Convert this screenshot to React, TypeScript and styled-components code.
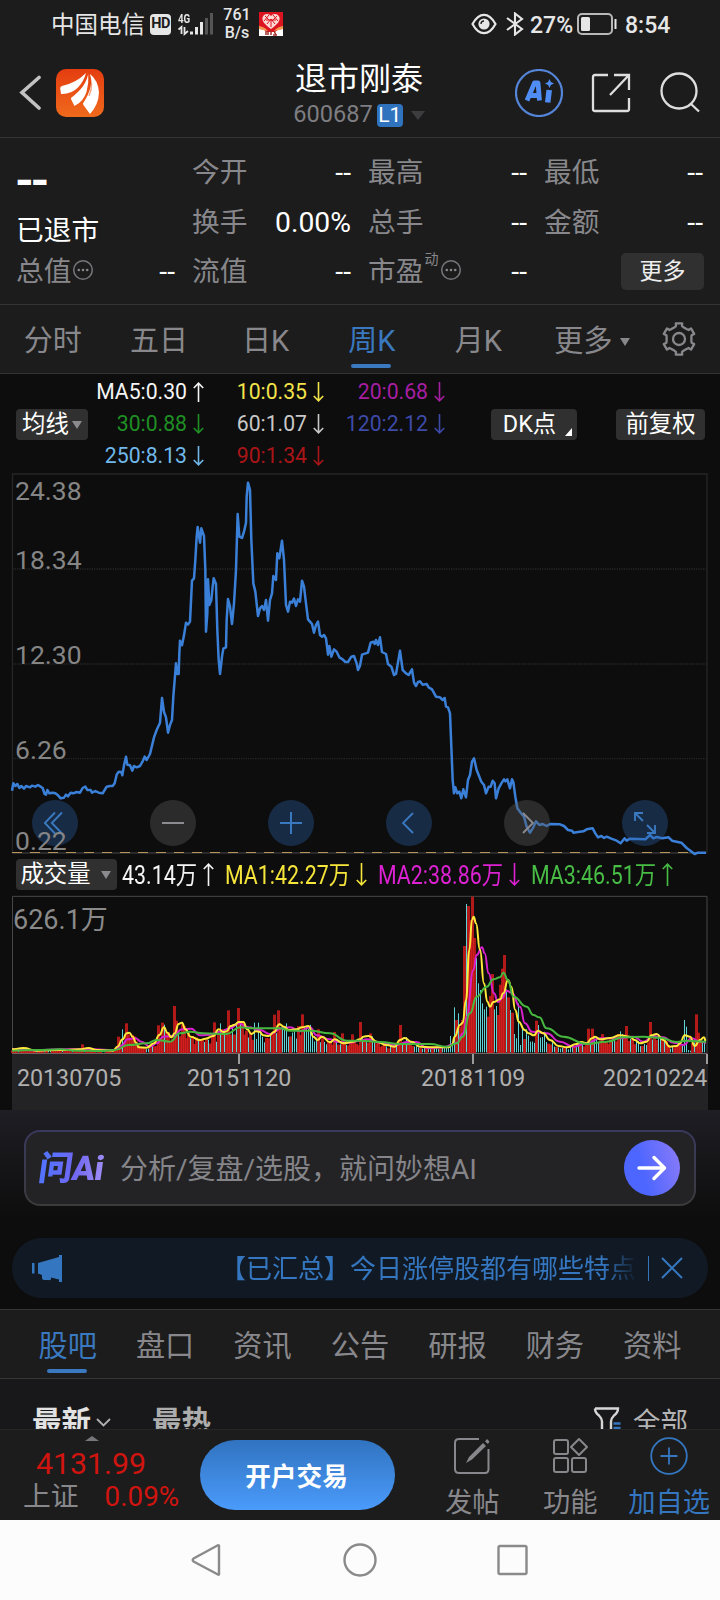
import React from "react";
import styled, { createGlobalStyle } from "styled-components";

const Global = createGlobalStyle`
  * { box-sizing: border-box; }
  body { margin: 0; background: #0d0d0d; font-family: Roboto, "Noto Sans CJK SC", sans-serif; }
  svg { display: block; flex: none; }
`;

const Screen = styled.div`
  width: 720px;
  height: 1600px;
  overflow: hidden;
  display: flex;
  flex-direction: column;
  background: #0d0d0d;
  color: #fff;
  line-height: 1;
  white-space: nowrap;
`;

/* ---------- status bar ---------- */
const StatusBar = styled.div`
  height: 48px;
  padding: 0 50px 0 51px;
  display: flex;
  align-items: center;
  background: #1c1c1c;
  color: #e6e6e6;
`;
const Carrier = styled.span`font-size: 23.5px; font-weight: 400; width: 99px; padding-top: 3px;`;
const HdBadge = styled.span`
  width: 21px; height: 21px; border-radius: 4px; background: #e6e6e6; color: #1c1c1c;
  font-size: 14.5px; font-weight: 700; display: flex; align-items: center; justify-content: center;
  letter-spacing: -0.5px;
`;
const Signal = styled.div`width: 36px; height: 24px; margin-left: 7px; position: relative;`;
const SignalLabel = styled.span`
  position: absolute; left: 0; top: 0; font-size: 13px; font-weight: 700; transform: scaleX(0.75); transform-origin: left;
`;
const Speed = styled.div`
  width: 30px; margin-left: 8px; font-size: 16px; font-weight: 500; line-height: 18px; text-align: center; padding-bottom: 1px;
`;
const StatusRight = styled.div`margin-left: auto; display: flex; align-items: center;`;
const StatusNumber = styled.span<{ $w: number }>`
  font-size: 23px; font-weight: 500; width: ${(p) => p.$w}px; padding-top: 2px;
`;

/* ---------- header ---------- */
const Header = styled.header`
  height: 90px; padding: 0 19px; display: flex; align-items: center; justify-content: space-between;
  background: #1c1c1c; border-bottom: 1px solid #333;
`;
const HeaderSide = styled.div<{ $gap: number }>`display: flex; align-items: center; width: 186px; gap: ${(p) => p.$gap}px;`;
const TitleBlock = styled.div`display: flex; flex-direction: column; align-items: center; padding: 5px 2px 0 0;`;
const Title = styled.h1`margin: 0; font-size: 32px; font-weight: 400; line-height: 40px;`;
const CodeRow = styled.div`display: flex; align-items: center; height: 32px; color: #7e7e82; font-size: 23.6px;`;
const LevelBadge = styled.span`
  margin: 0 8px 0 4px; width: 26px; height: 23px; border-radius: 4px; background: #2f73bf; color: #fff;
  font-size: 21px; display: flex; align-items: center; justify-content: center;
`;
const Caret = styled.i<{ $w: number; $h: number; $c: string }>`
  border-left: ${(p) => p.$w / 2}px solid transparent;
  border-right: ${(p) => p.$w / 2}px solid transparent;
  border-top: ${(p) => p.$h}px solid ${(p) => p.$c};
`;

/* ---------- quote ---------- */
const Quote = styled.section`
  height: 167px; padding: 10px 16px 7px 16px; background: #1c1c1c; border-bottom: 1px solid #333;
  display: grid; grid-template-columns: 160px repeat(3, 160px); column-gap: 16px; grid-template-rows: repeat(3, 49.5px);
`;
const PriceCell = styled.div`grid-row: 1 / span 2; display: flex; flex-direction: column; padding-top: 9px;`;
const PriceDash = styled.span`font-size: 48px; font-weight: 700; line-height: 48px; letter-spacing: -3.5px; margin-left: -1px;`;
const StatusText = styled.span`font-size: 27.7px; font-weight: 400; line-height: 34px; margin-top: 9px;`;
const QuoteCell = styled.div`display: flex; align-items: center; color: #88888c; font-size: 27.7px; padding-top: 1px;`;
const QuoteValue = styled.span`margin-left: auto; margin-right: 1px; color: #fff; font-size: 28.3px;`;
const Sup = styled.sup`font-size: 14px; align-self: flex-start; margin-top: 4px; line-height: 14px; width: 16px; padding-left: 1px;`;
const MoreButton = styled.button`
  margin: -1px 0 0 auto; width: 83px; height: 37px; border: 0; border-radius: 5px; background: #303030; color: #eee;
  font: 400 23px/1 Roboto, "Noto Sans CJK SC", sans-serif; padding: 0;
`;

/* ---------- period tabs ---------- */
const PeriodTabs = styled.nav`
  height: 69px; display: flex; background: #1c1c1c; border-bottom: 1px solid #333;
`;
const PeriodTab = styled.div<{ $active?: boolean }>`
  width: 106.4px; display: flex; justify-content: center; align-items: center; position: relative; padding: 5px 1px 0 0;
  font-size: 29px; color: ${(p) => (p.$active ? "#3a78bf" : "#88888c")};
  &::after {
    content: ""; position: absolute; left: 50%; margin-left: -21px; bottom: 5px; width: 40px; height: 4px; border-radius: 2px;
    background: ${(p) => (p.$active ? "#3a78bf" : "transparent")};
  }
`;
const PeriodMore = styled.div`
  width: 130px; padding: 5px 0 0 22px; display: flex; align-items: center; gap: 7px; font-size: 29.3px; color: #88888c;
`;
const GearSlot = styled.div`flex: 1; display: flex; align-items: center; padding-bottom: 1px; margin-left: -1px;`;

/* ---------- chart ---------- */
const Legend = styled.div`height: 96px; display: flex; align-items: center; padding: 4px 15px 0 16px;`;
const Chip = styled.span<{ $w: number }>`
  width: ${(p) => p.$w}px; height: 31px; border-radius: 4px; background: #303030; color: #fff; font-size: 23.4px;
  display: flex; align-items: center; justify-content: center; gap: 3px; position: relative; padding-top: 1px;
`;
const LegendGrid = styled.div`
  display: grid; grid-template-columns: 117px 120px 121px; grid-template-rows: repeat(3, 32px); width: 358px; margin: 0 46px 0 -1px;
`;
const LegendItem = styled.span<{ $c: string }>`
  color: ${(p) => p.$c}; font-size: 21.2px; display: flex; align-items: center; justify-content: flex-end; gap: 6px;
`;
const Corner = styled.i`
  position: absolute; right: 5px; bottom: 4px; border-left: 7px solid transparent; border-bottom: 8px solid #fff;
`;
const ChartBox = styled.div<{ $h: number }>`position: relative; height: ${(p) => p.$h}px;`;
const AxisLabel = styled.span<{ $y: number }>`
  position: absolute; left: 15px; top: ${(p) => p.$y}px; font-size: 26.5px; color: #858585;
`;
const Controls = styled.div`position: absolute; left: 32px; top: 330px; display: flex; gap: 72px;`;
const Control = styled.div<{ $muted?: boolean }>`
  width: 46px; height: 46px; border-radius: 50%; display: flex; align-items: center; justify-content: center;
  color: ${(p) => (p.$muted ? "#8b8b90" : "#3a78bf")};
  background: ${(p) => (p.$muted ? "rgba(90,90,90,.4)" : "rgba(40,95,165,.37)")};
`;
const VolumeLegend = styled.div`height: 36px; display: flex; align-items: center; padding-left: 16px; margin-top: -4px;`;
const Condensed = styled.span<{ $c: string; $w: number; $m: number }>`
  color: ${(p) => p.$c}; width: ${(p) => p.$w}px; margin-left: ${(p) => p.$m}px; display: flex; justify-content: space-between; align-items: center;
`;
const Squeezed = styled.span`font-size: 25px; transform: scaleX(0.855); transform-origin: left; width: 0; padding-top: 3px;`;
const VolumeLabel = styled.span`position: absolute; left: 13px; top: 15px; font-size: 27px; color: #8a8a8a;`;
const Dates = styled.div`
  height: 56px; margin: 0 12px; padding: 13px 0 0 5px; background: #232325; color: #b0b0b0; font-size: 23.2px;
  display: grid; grid-template-columns: 170px 234px 182px 1fr;
`;

/* ---------- ask box ---------- */
const AskArea = styled.section`height: 128px; padding: 20px 24px 0; background: linear-gradient(#1e1e24, #0d0d0d 85%);`;
const AskFrame = styled.div`height: 76px; padding: 2px; border-radius: 16px; background: linear-gradient(#3a3960, #3b3a3c);`;
const AskBox = styled.div`
  height: 100%; border-radius: 14px; background: #232325; display: flex; align-items: center; padding: 0 14px 0 13px;
`;
const AskLogo = styled.span`
  font-size: 34px; font-weight: 900; width: 81px; letter-spacing: -0.7px;
  background: linear-gradient(90deg, #5572ff 10%, #7067f0 45%, #a08ff5 82%); -webkit-background-clip: text; color: transparent;
  transform: skewX(-8deg); line-height: 40px;
`;
const AskHint = styled.span`flex: 1; font-size: 28px; color: #85858a; padding-top: 4px;`;
const SendButton = styled.span`
  width: 56px; height: 56px; border-radius: 50%; background: linear-gradient(75deg, #4d66ff 35%, #8d7cf8);
  display: flex; align-items: center; justify-content: center;
`;
const Notice = styled.section`
  height: 60px; margin: 0 12px; padding: 0 25px 0 20px; border-radius: 30px; background: #111a24; color: #3476bf;
  display: flex; align-items: center;
`;
const NoticeText = styled.span`
  margin-left: 158px; width: 418px; font-size: 26px; overflow: hidden; line-height: 36px; padding-top: 1px;
  mask-image: linear-gradient(90deg, #000 92%, transparent 100%);
`;
const NoticeRule = styled.i`width: 1px; height: 25px; background: #3476bf; margin: 0 12px 0 11px;`;

/* ---------- feed ---------- */
const FeedTabs = styled.nav`
  height: 70px; margin-top: 11px; padding: 0 19px; display: flex; background: #1c1c1c;
  border-top: 1px solid #363636; border-bottom: 1px solid #363636;
`;
const FeedTab = styled(PeriodTab)`
  width: auto; flex: 1; font-size: 29.2px; padding: 5px 0 0;
  &::after { bottom: 5px; }
`;
const Feed = styled.div`
  height: 50px; overflow: hidden; background: #18181a; display: flex; align-items: flex-start; padding: 28px 32px 0 32px;
`;
const FeedSort = styled.span<{ $c: string; $w: number }>`
  width: ${(p) => p.$w}px; color: ${(p) => p.$c}; font-weight: 700; font-size: 29.5px; display: flex; align-items: center; gap: 5px; line-height: 30px;
`;
const FeedFilter = styled.span`margin-left: auto; display: flex; gap: 12px; color: #b4b4b4; font-size: 27.5px; line-height: 32px;`;

/* ---------- bottom ---------- */
const BottomBar = styled.footer`
  height: 91px; background: #1c1c1c; border-top: 1px solid #262626; display: flex; padding-right: 6px;
`;
const IndexBox = styled.div`width: 200px; position: relative; padding: 17px 0 0 23px; color: #d0140f;`;
const IndexCaret = styled.i`
  position: absolute; left: 85px; top: 6px; border-left: 7px solid transparent; border-right: 7px solid transparent; border-bottom: 5px solid #77777b;
`;
const IndexValue = styled.div`font-size: 30.3px; line-height: 34px; padding-left: 13px;`;
const IndexRow = styled.div`display: flex; align-items: center; font-size: 27.8px; line-height: 32px; gap: 26px;`;
const IndexName = styled.span`color: #88888c;`;
const TradeButton = styled.div`
  width: 196px; height: 70px; margin-top: 10px; border-radius: 35px; background: linear-gradient(#3173c0, #4a9bfb);
  display: flex; align-items: center; justify-content: center; font-weight: 700; font-size: 25.7px; padding: 5px 2px 0 0;
`;
const Action = styled.div<{ $w: number; $m: number; $c?: string }>`
  width: ${(p) => p.$w}px; margin-left: ${(p) => p.$m}px; color: ${(p) => p.$c || "#88888c"}; padding-top: 7px;
  display: flex; flex-direction: column; align-items: center; gap: 12px; font-size: 27.3px; line-height: 32px;
`;
const SystemNav = styled.div`
  height: 80px; background: #fcfcfc; display: flex; justify-content: center; align-items: center; gap: 120px; padding-right: 0;
`;

/* ---------- chart data, in thirds of a pixel ---------- */
const PRICE =
  "36,512 40,490 46,498 52,492 58,504 64,498 72,506 78,498 90,502 96,497 106,500 114,495 122,500 128,504 134,522 138,524 142,510 148,520 158,518 166,520 174,526 182,535 192,533 198,524 204,529 212,518 220,520 230,516 240,518 248,504 256,500 262,510 272,510 276,518 286,513 296,518 308,520 314,510 320,500 330,498 338,498 344,490 350,464 356,455 364,456 367,466 372,436 378,410 382,434 390,436 397,452 402,438 410,442 420,438 428,424 434,410 440,420 450,402 462,352 470,330 480,308 486,234 492,276 498,292 504,338 510,315 516,300 520,230 524,180 528,130 532,162 536,162 538,100 540,62 546,76 552,46 558,8 564,14 570,5 576,-118 582,-125 586,-180 590,-250 593,-279 600,-232 604,-275 612,-252 616,-150 618,35 622,-20 624,-122 628,-45 634,-60 638,-100 641,-125 648,-108 652,30 656,120 660,162 666,110 670,86 678,82 680,0 684,-63 690,-40 696,12 702,-50 708,-150 713,-318 718,-250 726,-246 732,-265 738,-292 740,-370 744,-412 750,-390 754,-240 760,-110 766,-85 774,-12 780,-35 786,-42 792,-30 798,-60 804,2 810,-60 816,-80 820,-132 828,-120 832,-200 838,-185 846,-238 852,-180 858,-45 864,-25 870,-55 876,-52 882,-64 888,-42 894,-62 900,-55 906,-118 912,-100 918,-50 924,-2 930,5 936,12 942,38 948,15 954,5 960,45 966,50 972,45 978,55 984,104 988,78 994,110 1002,88 1010,95 1018,112 1028,118 1036,126 1044,126 1054,110 1062,108 1070,130 1074,150 1080,137 1086,104 1104,98 1112,68 1120,65 1124,72 1128,60 1134,75 1140,52 1146,96 1158,102 1164,132 1174,140 1182,165 1188,162 1200,92 1208,150 1218,160 1226,165 1236,148 1242,188 1248,198 1254,186 1260,184 1268,194 1280,192 1286,202 1296,208 1308,230 1320,232 1328,240 1334,234 1338,260 1344,262 1350,280 1354,380 1358,480 1362,520 1366,502 1372,520 1378,515 1384,535 1390,508 1398,532 1404,480 1410,465 1416,425 1422,415 1430,450 1444,485 1452,495 1458,520 1466,500 1472,500 1478,482 1484,490 1488,535 1496,505 1504,490 1512,478 1516,484 1522,478 1530,505 1536,478 1540,486 1546,530 1552,565 1562,578 1572,590 1580,620 1590,638 1600,622 1608,604 1618,615 1628,612 1640,618 1650,612 1680,613 1692,618 1704,630 1716,632 1720,638 1734,636 1750,634 1760,628 1778,625 1786,640 1794,652 1804,648 1812,654 1820,650 1834,656 1850,662 1862,670 1874,655 1880,662 1890,656 1936,658 1950,645 1960,655 1970,651 1986,655 2006,652 2016,662 2044,668 2060,684 2076,696 2084,702 2094,698 2118,698";

type Pt = [number, number];
const parse = (s: string): Pt[] => s.split(" ").map((p) => p.split(",").map(Number) as Pt);

const MA1 = parse(
  "36,478 70,474 110,482 180,480 240,478 265,474 290,480 340,482 352,470 368,448 380,430 388,428 398,440 408,458 416,472 440,473 462,460 478,435 492,412 502,428 514,442 524,430 536,402 546,398 556,418 572,440 600,450 616,446 640,438 656,418 670,426 680,424 692,408 704,404 716,396 730,396 742,418 754,432 768,424 778,425 790,436 806,438 822,426 838,403 852,410 866,420 890,418 906,412 926,408 940,440 952,450 966,440 990,457 1004,448 1030,460 1060,455 1080,448 1090,440 1106,438 1130,455 1160,465 1184,470 1200,450 1214,444 1234,455 1260,470 1300,472 1345,472 1356,465 1364,440 1380,405 1388,398 1398,330 1408,180 1416,90 1421,80 1428,100 1440,180 1452,280 1462,335 1470,350 1480,336 1500,328 1510,310 1524,270 1534,290 1546,360 1556,395 1574,420 1586,430 1602,436 1614,422 1630,430 1650,450 1676,468 1700,472 1730,462 1744,456 1760,460 1776,445 1785,440 1800,448 1830,444 1860,436 1890,440 1904,450 1920,460 1940,455 1954,436 1970,432 1990,450 2010,470 2030,468 2040,460 2054,436 2070,440 2084,468 2100,450 2112,442 2118,455"
);
const MA2 = parse(
  "36,477 110,481 180,478 280,478 340,480 366,466 382,448 406,445 424,455 450,470 470,460 490,440 520,438 546,418 574,416 600,436 630,434 660,425 690,415 716,400 745,412 780,420 810,432 845,415 870,412 900,424 930,412 950,436 990,448 1010,455 1050,458 1080,452 1100,448 1150,460 1190,465 1220,456 1250,456 1280,474 1330,472 1370,458 1390,430 1400,380 1420,240 1430,195 1446,172 1454,190 1466,250 1482,310 1494,336 1506,325 1520,302 1535,308 1560,350 1575,400 1596,425 1640,430 1680,455 1720,470 1760,460 1800,445 1850,445 1900,440 1930,455 1960,438 1990,442 2020,458 2050,465 2075,445 2100,455 2118,458"
);
const MA3 = parse(
  "36,482 110,480 180,478 230,482 300,483 345,480 385,465 440,460 470,450 510,455 540,430 570,425 610,430 680,432 720,412 760,415 840,415 870,422 930,422 990,430 1040,452 1080,452 1140,456 1200,462 1290,462 1340,470 1370,460 1388,440 1410,370 1430,320 1460,290 1480,268 1500,262 1510,248 1524,270 1540,320 1580,350 1600,375 1618,382 1640,415 1690,440 1760,462 1820,455 1870,442 1930,440 1980,443 2030,456 2060,452 2118,455"
);

/* weeks whose volume stands out: x, top, falling week */
const PEAKS: [number, number, boolean][] = [
  [248, 463, false], [356, 440, false], [368, 418, true], [380, 400, false], [476, 406, false], [488, 398, false],
  [494, 404, true], [524, 348, false], [530, 392, false], [644, 397, false], [662, 400, true], [686, 361, false],
  [716, 354, false], [764, 398, true], [776, 398, true], [824, 374, false], [836, 361, false], [860, 400, true],
  [908, 373, false], [920, 408, true], [956, 418, false], [1004, 426, false], [1028, 430, false], [1058, 433, false],
  [1082, 396, false], [1112, 430, false], [1202, 405, false], [1352, 438, true], [1364, 352, true], [1370, 390, false],
  [1376, 370, true], [1382, 410, false], [1388, 390, false], [1394, 168, false], [1400, 42, true], [1406, 48, false],
  [1412, 90, false], [1418, 20, false], [1424, 144, false], [1430, 204, true], [1436, 280, true], [1442, 300, true],
  [1448, 340, true], [1454, 358, true], [1460, 350, true], [1466, 380, false], [1472, 318, false], [1478, 252, false],
  [1484, 358, true], [1490, 348, true], [1496, 375, false], [1502, 284, false], [1508, 236, false], [1514, 195, false],
  [1520, 298, true], [1526, 322, false], [1532, 360, true], [1538, 368, false], [1544, 432, true], [1550, 445, true],
  [1556, 340, true], [1562, 465, true], [1568, 408, true], [1610, 392, false], [1616, 405, true], [1766, 416, false],
  [1778, 416, false], [1808, 432, false], [1862, 424, true], [1880, 408, false], [1952, 396, false], [2054, 390, true],
  [2060, 410, true], [2066, 480, true], [2072, 482, true], [2090, 373, false], [2096, 428, false],
];

const valueAt = (pts: Pt[], x: number) => {
  for (let i = 1; i < pts.length; i++) {
    if (x <= pts[i][0]) {
      const [x0, y0] = pts[i - 1];
      const [x1, y1] = pts[i];
      return y0 + ((y1 - y0) * (x - x0)) / (x1 - x0);
    }
  }
  return pts[pts.length - 1][1];
};

const noise = (n: number) => {
  const v = Math.sin(n * 127.1 + 3.7) * 43758.5453;
  return v - Math.floor(v);
};

const BARS = Array.from({ length: 347 }, (_, i) => {
  const x = 36 + i * 6;
  const peak = PEAKS.find((p) => p[0] - x >= 0 && p[0] - x < 6);
  if (peak) return { x, top: peak[1], down: peak[2] };
  const h = 487 - valueAt(MA1, Math.max(36, x - 2));
  const fallShare = x < 340 ? 0.2 : x < 620 ? 0.25 : x > 1540 && x < 1750 ? 0.75 : x > 1230 && x < 1360 ? 0.9 : 0.5;
  return { x, top: 487 - h * (0.55 + 0.6 * noise(i)), down: noise(i + 500) < fallShare };
});

const smooth = (pts: Pt[]) =>
  pts.reduce((d, [x, y], i) => {
    if (i === 0) return `M${x},${y}`;
    const [px, py] = pts[i - 1];
    const mx = (px + x) / 2;
    return `${d} C${mx},${py} ${mx},${y} ${x},${y}`;
  }, "");

const Arrow = ({ up, h = 20 }: { up?: boolean; h?: number }) => (
  <svg width="11" height={h} viewBox={`0 0 11 ${h}`} fill="none" stroke="currentColor" strokeWidth="1.6">
    {up ? <path d={`M5.5 ${h}V1M.8 6 5.5 1.2 10.2 6`} /> : <path d={`M5.5 0v${h - 1}M.8 ${h - 6} 5.5 ${h - 1.2} 10.2 ${h - 6}`} />}
  </svg>
);

const DotsIcon = styled.svg`margin: -5px 0 0 1px;`;
const InfoDots = () => (
  <DotsIcon width="22" height="22" viewBox="0 0 22 22">
    <circle cx="11" cy="11" r="9.3" fill="none" stroke="#77777b" strokeWidth="1.5" />
    <g fill="#88888c"><circle cx="6.8" cy="11" r="1.3" /><circle cx="11" cy="11" r="1.3" /><circle cx="15.2" cy="11" r="1.3" /></g>
  </DotsIcon>
);

const gearPath = () => {
  const pts: string[] = [];
  for (let i = 0; i < 6; i++) {
    const a = (i * Math.PI) / 3 - Math.PI / 2;
    [[-0.36, 12.6], [-0.23, 13.2], [-0.2, 16], [0.2, 16], [0.23, 13.2], [0.36, 12.6]].forEach(([da, r]) => {
      pts.push(`${(18 + r * Math.cos(a + da)).toFixed(1)},${(18 + r * Math.sin(a + da)).toFixed(1)}`);
    });
  }
  return `M${pts.join("L")}Z`;
};

const AppBadge = styled.svg`margin-left: 7px;`;
const Bluetooth = styled.svg`margin: 0 5px 0 8px;`;
const Battery = styled.svg`margin-right: 8px;`;
const DkChip = styled(Chip)`padding-right: 9px;`;
const AdjustChip = styled(Chip)`margin-left: auto;`;
const VolumeChip = styled(Chip)`gap: 10px; padding-right: 2px;`;
const VolumeSvg = styled.svg`position: relative; z-index: 1;`;

const LEGEND: [string, string, boolean?][] = [
  ["MA5:0.30", "#f5f5f5", true], ["10:0.35", "#f3e34a"], ["20:0.68", "#a61fa2"],
  ["30:0.88", "#1f8f24"], ["60:1.07", "#c8c8c8"], ["120:2.12", "#3d4aa8"],
  ["250:8.13", "#70b8ea"], ["90:1.34", "#a91518"],
];

export default function App() {
  return (
    <Screen>
      <Global />
      <StatusBar>
        <Carrier>中国电信</Carrier>
        <HdBadge>HD</HdBadge>
        <Signal>
          <SignalLabel>4G</SignalLabel>
          <svg width="36" height="24" viewBox="0 0 36 24" fill="#e6e6e6">
            <path d="M3.5 22v-7L.5 17.500M6.500 15v7l3.500-3" fill="none" stroke="#e6e6e6" strokeWidth="1.8" />
            <rect x="12" y="19.500" width="3" height="3" /><rect x="17" y="15" width="3" height="7.500" />
            <rect x="22" y="10" width="3" height="12.500" /><rect x="27" y="6" width="3" height="16.500" fill="#555" />
            <rect x="32" y="1" width="3" height="21.500" fill="#555" />
          </svg>
        </Signal>
        <Speed>761<br />B/s</Speed>
        <AppBadge width="24" height="24" viewBox="0 0 24 24">
          <path fill="#dc1420" d="M0 0h24v24H0z" />
          <path fill="#fff" d="M0 17q5 0 8 3h8q3-3 8-3v7H0z" />
          <path fill="#f29b51" d="M0 14q6 1 9 5L0 17zM24 14q-6 1-9 5l9-2z" />
          <path fill="#fbd9d4" d="M12 17C5 12 3 9 3.500 5.500 5 1 10 1 12 4c2-3 7-3 8.500 1.500C21 9 19 12 12 17z" />
          <path stroke="#dc1420" strokeWidth="1" fill="none" d="M6 4l4 4M10 3L5 9M14 3l5 6M18 4l-5 5M8 12l4-5 4 5M12 7v8M7 8h10" />
          <path stroke="#a3302a" strokeWidth="1.500" fill="none" d="M7 19v4M9 19v4M12 19v4M15 19l2 4M14 23h4" />
        </AppBadge>
        <StatusRight>
          <svg width="26" height="22" viewBox="0 0 26 22" fill="none" stroke="#e6e6e6" strokeWidth="2.200">
            <path d="M1.500 11Q6.500 1.800 13 1.800T24.500 11Q19.500 20.200 13 20.200T1.500 11z" />
            <circle cx="13" cy="11" r="5.600" fill="#e6e6e6" stroke="none" />
            <path d="M10 11a3 3 0 0 1 3-3" stroke="#1c1c1c" strokeWidth="1.300" />
          </svg>
          <Bluetooth width="20" height="24" viewBox="0 0 20 24" fill="none" stroke="#e6e6e6" strokeWidth="2.100">
            <path d="M2 6l15 11-7 5.500v-21L17 7 2 18" />
          </Bluetooth>
          <StatusNumber $w={47}>27%</StatusNumber>
          <Battery width="40" height="22" viewBox="0 0 40 22" fill="none" stroke="#b8b8b8" strokeWidth="2">
            <rect x="1" y="1" width="34" height="20" rx="4" /><rect x="4" y="4" width="9" height="14" rx="1.500" fill="#e6e6e6" stroke="none" />
            <path d="M38.500 6v10" stroke="#e6e6e6" />
          </Battery>
          <StatusNumber $w={45}>8:54</StatusNumber>
        </StatusRight>
      </StatusBar>

      <Header>
        <HeaderSide $gap={14}>
          <svg width="23" height="36" viewBox="0 0 23 36" fill="none" stroke="#c2c2c2" strokeWidth="3.600" strokeLinecap="round">
            <path d="M20 2.500 3 17.500l17 15.500" />
          </svg>
          <svg width="48" height="48" viewBox="0 0 48 48">
            <defs><linearGradient id="brand" x1="0" y1="0" x2="0" y2="1"><stop offset="0" stopColor="#e43d10" /><stop offset="1" stopColor="#f06a1c" /></linearGradient></defs>
            <rect width="48" height="48" rx="10" fill="url(#brand)" />
            <g fill="#fff">
              <path d="M30 4Q20 14 6 17q-2 .6-1.800 2.600L5 25q10 .5 17-6.500Q28 12 30 4z" />
              <path d="M32.300 5Q30 15 23 22q-4.500 4.500-7.500 6.500-1 .8-.3 2L18.500 37q9-4.500 12-14Q33 14 32.300 5z" />
              <path d="M34 5Q37 15 32 25.500q-2.300 5-4.800 8.500-.6 1 .4 2.200L34 45q8.500-9 9-21.500Q42 11 34 5z" />
            </g>
            <path d="M31 3Q39 14 33 27" fill="none" stroke="#e8500f" strokeWidth="1.200" opacity=".55" />
          </svg>
        </HeaderSide>
        <TitleBlock>
          <Title>退市刚泰</Title>
          <CodeRow>600687<LevelBadge>L1</LevelBadge><Caret $w={14} $h={9} $c="#3d3d3f" /></CodeRow>
        </TitleBlock>
        <HeaderSide $gap={28}>
          <svg width="48" height="48" viewBox="0 0 48 48" fill="none">
            <circle cx="24" cy="24" r="23" stroke="#5585d8" strokeWidth="2.200" />
            <path d="M12 31.500 19.500 14h3.500l1.500 17.500M15.500 26.500h8" stroke="#4f8df5" strokeWidth="4.800" strokeLinejoin="round" />
            <path d="M34.200 21 32.700 33.500" stroke="#4f8df5" strokeWidth="5.500" />
            <path d="M34.500 10l1.400 3.100 3.100 1.400-3.100 1.400-1.400 3.100-1.400-3.100-3.100-1.400 3.100-1.400z" fill="#4f8df5" />
          </svg>
          <svg width="40" height="40" viewBox="0 0 40 40" fill="none" stroke="#dedede" strokeWidth="2.300">
            <path d="M17 2H4Q2 2 2 4v32q0 2 2 2h32q2 0 2-2V25M23 2h15v15M38 2 19 22" />
          </svg>
          <svg width="42" height="42" viewBox="0 0 42 42" fill="none" stroke="#dedede" strokeWidth="2.300">
            <circle cx="20" cy="19" r="17.500" /><path d="m31.500 31.500 8.500 8" />
          </svg>
        </HeaderSide>
      </Header>

      <Quote>
        <PriceCell><PriceDash>--</PriceDash><StatusText>已退市</StatusText></PriceCell>
        <QuoteCell>今开<QuoteValue>--</QuoteValue></QuoteCell>
        <QuoteCell>最高<QuoteValue>--</QuoteValue></QuoteCell>
        <QuoteCell>最低<QuoteValue>--</QuoteValue></QuoteCell>
        <QuoteCell>换手<QuoteValue>0.00%</QuoteValue></QuoteCell>
        <QuoteCell>总手<QuoteValue>--</QuoteValue></QuoteCell>
        <QuoteCell>金额<QuoteValue>--</QuoteValue></QuoteCell>
        <QuoteCell>总值<InfoDots /><QuoteValue>--</QuoteValue></QuoteCell>
        <QuoteCell>流值<QuoteValue>--</QuoteValue></QuoteCell>
        <QuoteCell>市盈<Sup>动</Sup><InfoDots /><QuoteValue>--</QuoteValue></QuoteCell>
        <QuoteCell><MoreButton>更多</MoreButton></QuoteCell>
      </Quote>

      <PeriodTabs>
        <PeriodTab>分时</PeriodTab>
        <PeriodTab>五日</PeriodTab>
        <PeriodTab>日K</PeriodTab>
        <PeriodTab $active>周K</PeriodTab>
        <PeriodTab>月K</PeriodTab>
        <PeriodMore>更多<Caret $w={10} $h={8} $c="#88888c" /></PeriodMore>
        <GearSlot>
          <svg width="36" height="36" viewBox="0 0 36 36" fill="none" stroke="#88888c" strokeWidth="2.300" strokeLinejoin="round">
            <path d={gearPath()} /><circle cx="18" cy="18" r="6" />
          </svg>
        </GearSlot>
      </PeriodTabs>

      <Legend>
        <Chip $w={72}>均线<Caret $w={10} $h={8} $c="#8b8b8f" /></Chip>
        <LegendGrid>
          {LEGEND.map(([t, c, up]) => <LegendItem key={t} $c={c}>{t}<Arrow up={up} /></LegendItem>)}
        </LegendGrid>
        <DkChip $w={86}>DK点<Corner /></DkChip>
        <AdjustChip $w={89}>前复权</AdjustChip>
      </Legend>

      <ChartBox $h={390}>
        <svg width="720" height="390" viewBox="0 -450 2160 1170" fill="none">
          <path d="M37.500,698V-438H2121V698" stroke="#262628" strokeWidth="4" />
          <path d="M37,-153H2118M37,132H2118M37,416H2118" stroke="#262626" strokeWidth="4" strokeDasharray="4 3" />
          <path d="M37,699H2120" stroke="#2a2a2a" strokeWidth="6" />
          <path d="M36,697.500H2118" stroke="#b8945c" strokeWidth="3.500" strokeDasharray="30 24" />
          <polyline points={PRICE} stroke="#3b80d8" strokeWidth="7.500" strokeLinejoin="round" />
        </svg>
        <Controls>
          <Control>
            <svg width="22" height="24" viewBox="0 0 22 24" fill="none" stroke="currentColor" strokeWidth="1.900"><path d="M11 1.500.8 12 11 22.500M18 1.500 7.800 12 18 22.500" /></svg>
          </Control>
          <Control $muted>
            <svg width="22" height="22" viewBox="0 0 22 22" stroke="currentColor" strokeWidth="2"><path d="M0 11h22" /></svg>
          </Control>
          <Control>
            <svg width="22" height="22" viewBox="0 0 22 22" stroke="currentColor" strokeWidth="2"><path d="M0 11h22M11 0v22" /></svg>
          </Control>
          <Control>
            <svg width="14" height="22" viewBox="0 0 14 22" fill="none" stroke="currentColor" strokeWidth="1.900"><path d="M11 1 1 11l10 10" /></svg>
          </Control>
          <Control $muted>
            <svg width="14" height="22" viewBox="0 0 14 22" fill="none" stroke="currentColor" strokeWidth="1.900"><path d="M3 1l10 10L3 21" /></svg>
          </Control>
          <Control>
            <svg width="22" height="22" viewBox="0 0 22 22" fill="none" stroke="currentColor" strokeWidth="1.900"><path d="M1 9V1h8M1.500 1.500 9 9M21 13v8h-8M20.500 20.500 13 13" /></svg>
          </Control>
        </Controls>
        <AxisLabel $y={8}>24.38</AxisLabel>
        <AxisLabel $y={77}>18.34</AxisLabel>
        <AxisLabel $y={172}>12.30</AxisLabel>
        <AxisLabel $y={267}>6.26</AxisLabel>
        <AxisLabel $y={358}>0.22</AxisLabel>
      </ChartBox>

      <VolumeLegend>
        <VolumeChip $w={101}>成交量<Caret $w={10} $h={8} $c="#8b8b8f" /></VolumeChip>
        <Condensed $c="#f5f5f5" $w={92} $m={5}><Squeezed>43.14万</Squeezed><Arrow up h={23} /></Condensed>
        <Condensed $c="#f6e53a" $w={142} $m={11}><Squeezed>MA1:42.27万</Squeezed><Arrow h={23} /></Condensed>
        <Condensed $c="#dc22d2" $w={142} $m={11}><Squeezed>MA2:38.86万</Squeezed><Arrow h={23} /></Condensed>
        <Condensed $c="#48bd45" $w={142} $m={11}><Squeezed>MA3:46.51万</Squeezed><Arrow up h={23} /></Condensed>
      </VolumeLegend>

      <ChartBox $h={162}>
        <VolumeSvg width="720" height="172" viewBox="0 6 2160 516" fill="none">
          <path d="M37.500,490V19H2121V490" stroke="#484848" strokeWidth="3" />
          {BARS.map((b) =>
            b.down
              ? <rect key={b.x} x={b.x} y={b.top} width="3" height={487 - b.top} fill="#5fd3d6" />
              : <rect key={b.x} x={b.x - 3} y={b.top} width="9" height={489 - b.top} fill="#dc1e1e" fillOpacity=".8" />
          )}
          <path d="M36,490.500H2122" stroke="#77615f" strokeWidth="3" />
          <path d="M717,492v30M1419,492v30M2121,492v30" stroke="#b4b4b4" strokeWidth="5" />
          <path d={smooth(MA2)} stroke="#d821cc" strokeWidth="6" />
          <path d={smooth(MA1)} stroke="#ffe93b" strokeWidth="6" />
          <path d={smooth(MA3)} stroke="#47b83f" strokeWidth="6" />
        </VolumeSvg>
        <VolumeLabel>626.1万</VolumeLabel>
      </ChartBox>
      <Dates><span>20130705</span><span>20151120</span><span>20181109</span><span>20210224</span></Dates>

      <AskArea>
        <AskFrame>
          <AskBox>
            <AskLogo>问Ai</AskLogo>
            <AskHint>分析/复盘/选股，就问妙想AI</AskHint>
            <SendButton>
              <svg width="30" height="26" viewBox="0 0 30 26" fill="none" stroke="#fff" strokeWidth="3.400" strokeLinecap="round" strokeLinejoin="round"><path d="M2 13h25M17 2.500 27.500 13 17 23.500" /></svg>
            </SendButton>
          </AskBox>
        </AskFrame>
      </AskArea>

      <Notice>
        <svg width="30" height="27" viewBox="0 0 30 27" fill="#3476bf">
          <path d="M0 8h2.500v10.500H0zM6 8l21-6V0h3v27h-3v-2.500l-8-2v1.500q0 1.500-2 1h-5q-2 0-2-2V20L6 18.500z" />
        </svg>
        <NoticeText>【已汇总】今日涨停股都有哪些特点</NoticeText>
        <NoticeRule />
        <svg width="22" height="22" viewBox="0 0 22 22" stroke="#3476bf" strokeWidth="2"><path d="M1 1l20 20M21 1 1 21" /></svg>
      </Notice>

      <FeedTabs>
        <FeedTab $active>股吧</FeedTab>
        {["盘口", "资讯", "公告", "研报", "财务", "资料"].map((t) => <FeedTab key={t}>{t}</FeedTab>)}
      </FeedTabs>

      <Feed>
        <FeedSort $c="#e2e2e2" $w={120}>最新
          <svg width="15" height="9" viewBox="0 0 15 9" fill="none" stroke="#b0b0b0" strokeWidth="1.800"><path d="m1 1 6.500 6.500L14 1" /></svg>
        </FeedSort>
        <FeedSort $c="#adadad" $w={70}>最热</FeedSort>
        <FeedFilter>
          <svg width="28" height="30" viewBox="0 0 28 30" fill="none" stroke="#d6d6d6" strokeWidth="2.400">
            <path d="M2 1.500h23q0 4-4 7-3 3-3 6v13M2 1.500q0 4 4 7 3 3 3 6v13" /><path d="M20.500 16.500h7M20.500 21h7" stroke="#3476bf" />
          </svg>
          全部
        </FeedFilter>
      </Feed>

      <BottomBar>
        <IndexBox>
          <IndexCaret />
          <IndexValue>4131.99</IndexValue>
          <IndexRow><IndexName>上证</IndexName>0.09%</IndexRow>
        </IndexBox>
        <TradeButton>开户交易</TradeButton>
        <Action $w={80} $m={37}>
          <svg width="38" height="38" viewBox="0 0 38 38" fill="none" stroke="currentColor" strokeWidth="2">
            <path d="M26 2H6Q2 2 2 6v26q0 4 4 4h26q3.500 0 3.500-4V12" />
            <path d="M13 26l3-6L30 6l3 3-14 13.500zM32 4.500 34 2l2.500 2.500L35 7z" fill="currentColor" stroke="none" />
          </svg>
          发帖
        </Action>
        <Action $w={80} $m={18}>
          <svg width="38" height="38" viewBox="0 0 38 38" fill="none" stroke="currentColor" strokeWidth="2">
            <rect x="3" y="3" width="14" height="14" rx="2" /><rect x="3" y="21" width="14" height="14" rx="2" /><rect x="21" y="21" width="14" height="14" rx="2" />
            <path d="M28 2l8 8-8 8-8-8z" strokeLinejoin="round" />
          </svg>
          功能
        </Action>
        <Action $w={90} $m={14} $c="#3476bf">
          <svg width="38" height="38" viewBox="0 0 38 38" fill="none" stroke="currentColor" strokeWidth="1.800">
            <circle cx="19" cy="19" r="17.800" /><path d="M10.500 19h17M19 10.500v17" />
          </svg>
          加自选
        </Action>
      </BottomBar>

      <SystemNav>
        <svg width="32" height="34" viewBox="0 0 32 34" fill="none" stroke="#8a8a8a" strokeWidth="2.400" strokeLinejoin="round"><path d="M28 2.500v29Q27 32 26 31L2.500 18.500q-1.500-1.500 0-3L26 2.800Q27 2 28 2.500z" /></svg>
        <svg width="34" height="34" viewBox="0 0 34 34" fill="none" stroke="#8a8a8a" strokeWidth="2.400"><circle cx="17" cy="17" r="15.500" /></svg>
        <svg width="32" height="32" viewBox="0 0 32 32" fill="none" stroke="#8a8a8a" strokeWidth="2.400"><rect x="1.500" y="2" width="28" height="28" rx="1.500" /></svg>
      </SystemNav>
    </Screen>
  );
}
